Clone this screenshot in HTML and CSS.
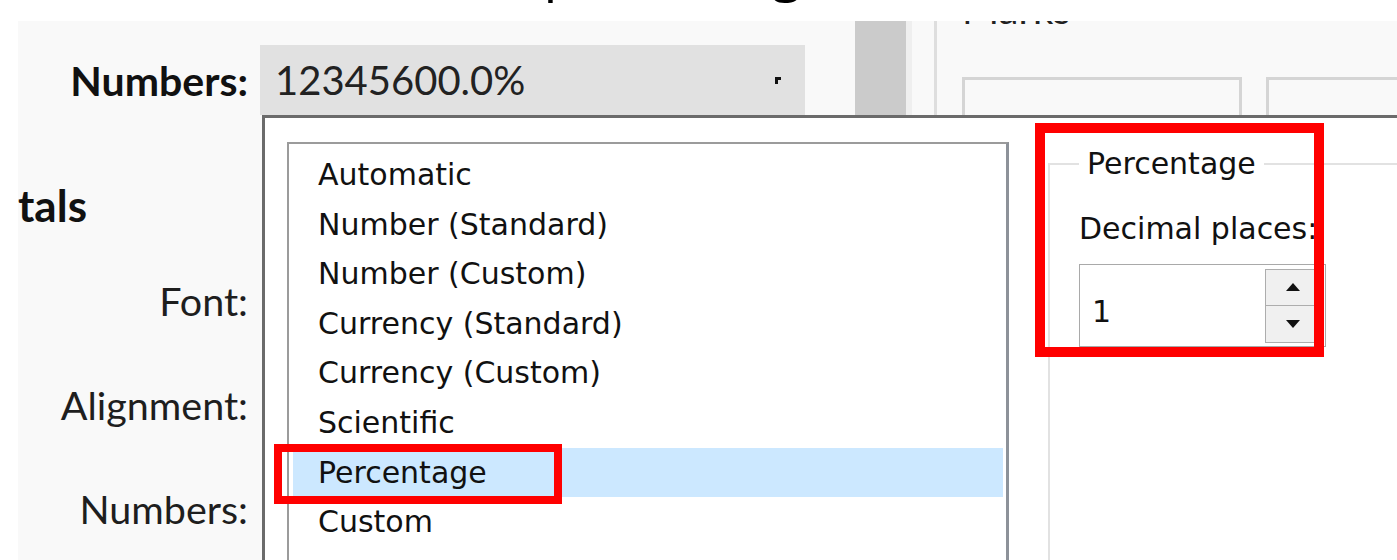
FILE: index.html
```html
<!DOCTYPE html>
<html lang="en">
<head>
<meta charset="utf-8">
<title>Number format</title>
<link rel="stylesheet" href="styles.css">
</head>
<body>
<div class="page">
  <header class="title"><span class="title-text">Format as percentage</span></header>
  <div class="workspace">
    <div class="gutter"></div>
    <section class="format-pane">
      <div class="top-row">
        <span class="label label-bold">Numbers:</span>
        <div class="dropdown">
          <span class="dropdown-value">12345600.0%</span>
          <svg class="caret" viewBox="0 0 6 7" width="6" height="7"><path d="M0 0H6V3H3V7H0Z" fill="#111"/></svg>
        </div>
      </div>
      <h2 class="section-title">tals</h2>
      <div class="rows">
        <div class="field-row"><span class="label">Font:</span></div>
        <div class="field-row"><span class="label">Alignment:</span></div>
        <div class="field-row"><span class="label">Numbers:</span></div>
      </div>
    </section>
    <div class="splitter"></div>
    <div class="divider"></div>
    <section class="marks-pane">
      <div class="marks-title">Marks</div>
      <div class="cards">
        <div class="card"></div>
        <div class="card"></div>
      </div>
    </section>
  </div>

  <div class="popup">
    <ul class="format-list">
      <li>Automatic</li>
      <li>Number (Standard)</li>
      <li>Number (Custom)</li>
      <li>Currency (Standard)</li>
      <li>Currency (Custom)</li>
      <li>Scientific</li>
      <li class="selected">Percentage</li>
      <li>Custom</li>
    </ul>
    <fieldset class="options">
      <legend>Percentage</legend>
      <div class="options-label">Decimal places:</div>
      <div class="spinbox">
        <span class="spin-value">1</span>
        <div class="spin-buttons">
          <div class="spin-btn"><svg viewBox="0 0 14 8" width="14" height="8"><path d="M0 8L7 0L14 8Z" fill="#111"/></svg></div>
          <div class="spin-btn spin-btn-down"><svg viewBox="0 0 14 8" width="14" height="8"><path d="M0 0H14L7 8Z" fill="#111"/></svg></div>
        </div>
      </div>
    </fieldset>
  </div>

  <div class="annot annot-list"></div>
  <div class="annot annot-panel"></div>
</div>
</body>
</html>
```

FILE: styles.css
```css
* { box-sizing: border-box; }
html, body { margin: 0; padding: 0; background: #fff; }
body {
  width: 1397px;
  height: 560px;
  overflow: hidden;
  font-family: "Lato", "DejaVu Sans", sans-serif;
  color: #1c1c1c;
}
.page { position: relative; width: 1397px; height: 560px; overflow: hidden; }

.title { height: 21px; overflow: hidden; padding-left: 273px; background: #fff; }
.title-text {
  display: block;
  font: 400 55px/55px "Open Sans", sans-serif;
  margin-top: -59px;
  white-space: nowrap;
  color: #000;
}

.workspace { display: flex; height: 539px; }
.gutter { width: 18px; flex: none; background: #fff; }

.format-pane { width: 837px; flex: none; background: #f9f9f9; overflow: hidden; }
.top-row { display: flex; align-items: center; margin-top: 24px; height: 70px; }
.label { width: 230px; flex: none; text-align: right; font-size: 39.5px; color: #1e1e1e; white-space: nowrap; }
.label-bold { font-weight: 700; font-size: 41px; color: #111; }
.dropdown {
  margin-left: 12px;
  width: 545px;
  height: 70px;
  background: #e1e1e1;
  display: flex;
  align-items: center;
  justify-content: space-between;
  padding: 0 24px 0 15px;
}
.dropdown-value { font-size: 40px; color: #222; }
.caret { display: block; }

.section-title { margin: 65px 0 0; font-size: 44px; font-weight: 700; line-height: 50px; color: #111; }
.rows { margin-top: 18px; }
.field-row { display: flex; align-items: center; height: 104px; }

.splitter { width: 51px; flex: none; background: #cbcbcb; }
.divider {
  width: 31px;
  flex: none;
  background: #f9f9f9;
  border-left: 6px solid #efefef;
  border-right: 3px solid #dedede;
}

.marks-pane { flex: 1; background: #f9f9f9; overflow: hidden; padding-left: 25px; }
.marks-title { font-size: 40px; line-height: 40px; margin-top: -32px; color: #222; }
.cards { display: flex; gap: 24px; margin-top: 48px; }
.card { width: 280px; height: 120px; flex: none; border: 3px solid #d5d5d5; }

.popup {
  position: absolute;
  left: 262px;
  top: 115px;
  right: -20px;
  bottom: -20px;
  background: #fff;
  border-top: 3px solid #6b6b6b;
  border-left: 3px solid #6b6b6b;
  display: flex;
  align-items: flex-start;
  padding: 24px 0 0 22px;
  font-family: "DejaVu Sans", sans-serif;
  color: #111;
}
.format-list {
  width: 722px;
  height: 460px;
  flex: none;
  margin: 0;
  padding: 6px 3px 0 4px;
  list-style: none;
  border: 2px solid #9b9b9b;
  border-right: 3px solid #8d9299;
}
.format-list li { height: 49.6px; line-height: 49.6px; padding-left: 25px; font-size: 30px; white-space: nowrap; }
.format-list li.selected { background: #cce8ff; }

.options {
  flex: 1;
  min-width: 0;
  height: 460px;
  margin: 4px 0 0 39px;
  padding: 0 0 0 29px;
  border: 2px solid #e2e2e2;
  border-right: none;
  border-bottom: none;
}
.options legend { padding: 0 8px; font-size: 30px; line-height: 36px; }
.options-label { margin-top: 29px; font-size: 30px; line-height: 36px; white-space: nowrap; }

.spinbox {
  margin-top: 17px;
  width: 247px;
  height: 83px;
  border: 1px solid #a9a9a9;
  display: flex;
  align-items: center;
  padding: 4px;
}
.spin-value { padding-left: 8px; margin-top: 12px; font-size: 30px; }
.spin-buttons { margin-left: auto; width: 56px; height: 74px; display: flex; flex-direction: column; }
.spin-btn {
  flex: 1;
  background: #f0f0f0;
  border: 1px solid #adadad;
  display: flex;
  align-items: center;
  justify-content: center;
}
.spin-btn svg { display: block; }
.spin-btn-down { border-top: none; }

.annot { position: absolute; border: 9px solid #ff0000; }
.annot-list { left: 274px; top: 444px; width: 288px; height: 60px; border-width: 8px; }
.annot-panel { left: 1035px; top: 123px; width: 289px; height: 234px; border-width: 10px; }
```
